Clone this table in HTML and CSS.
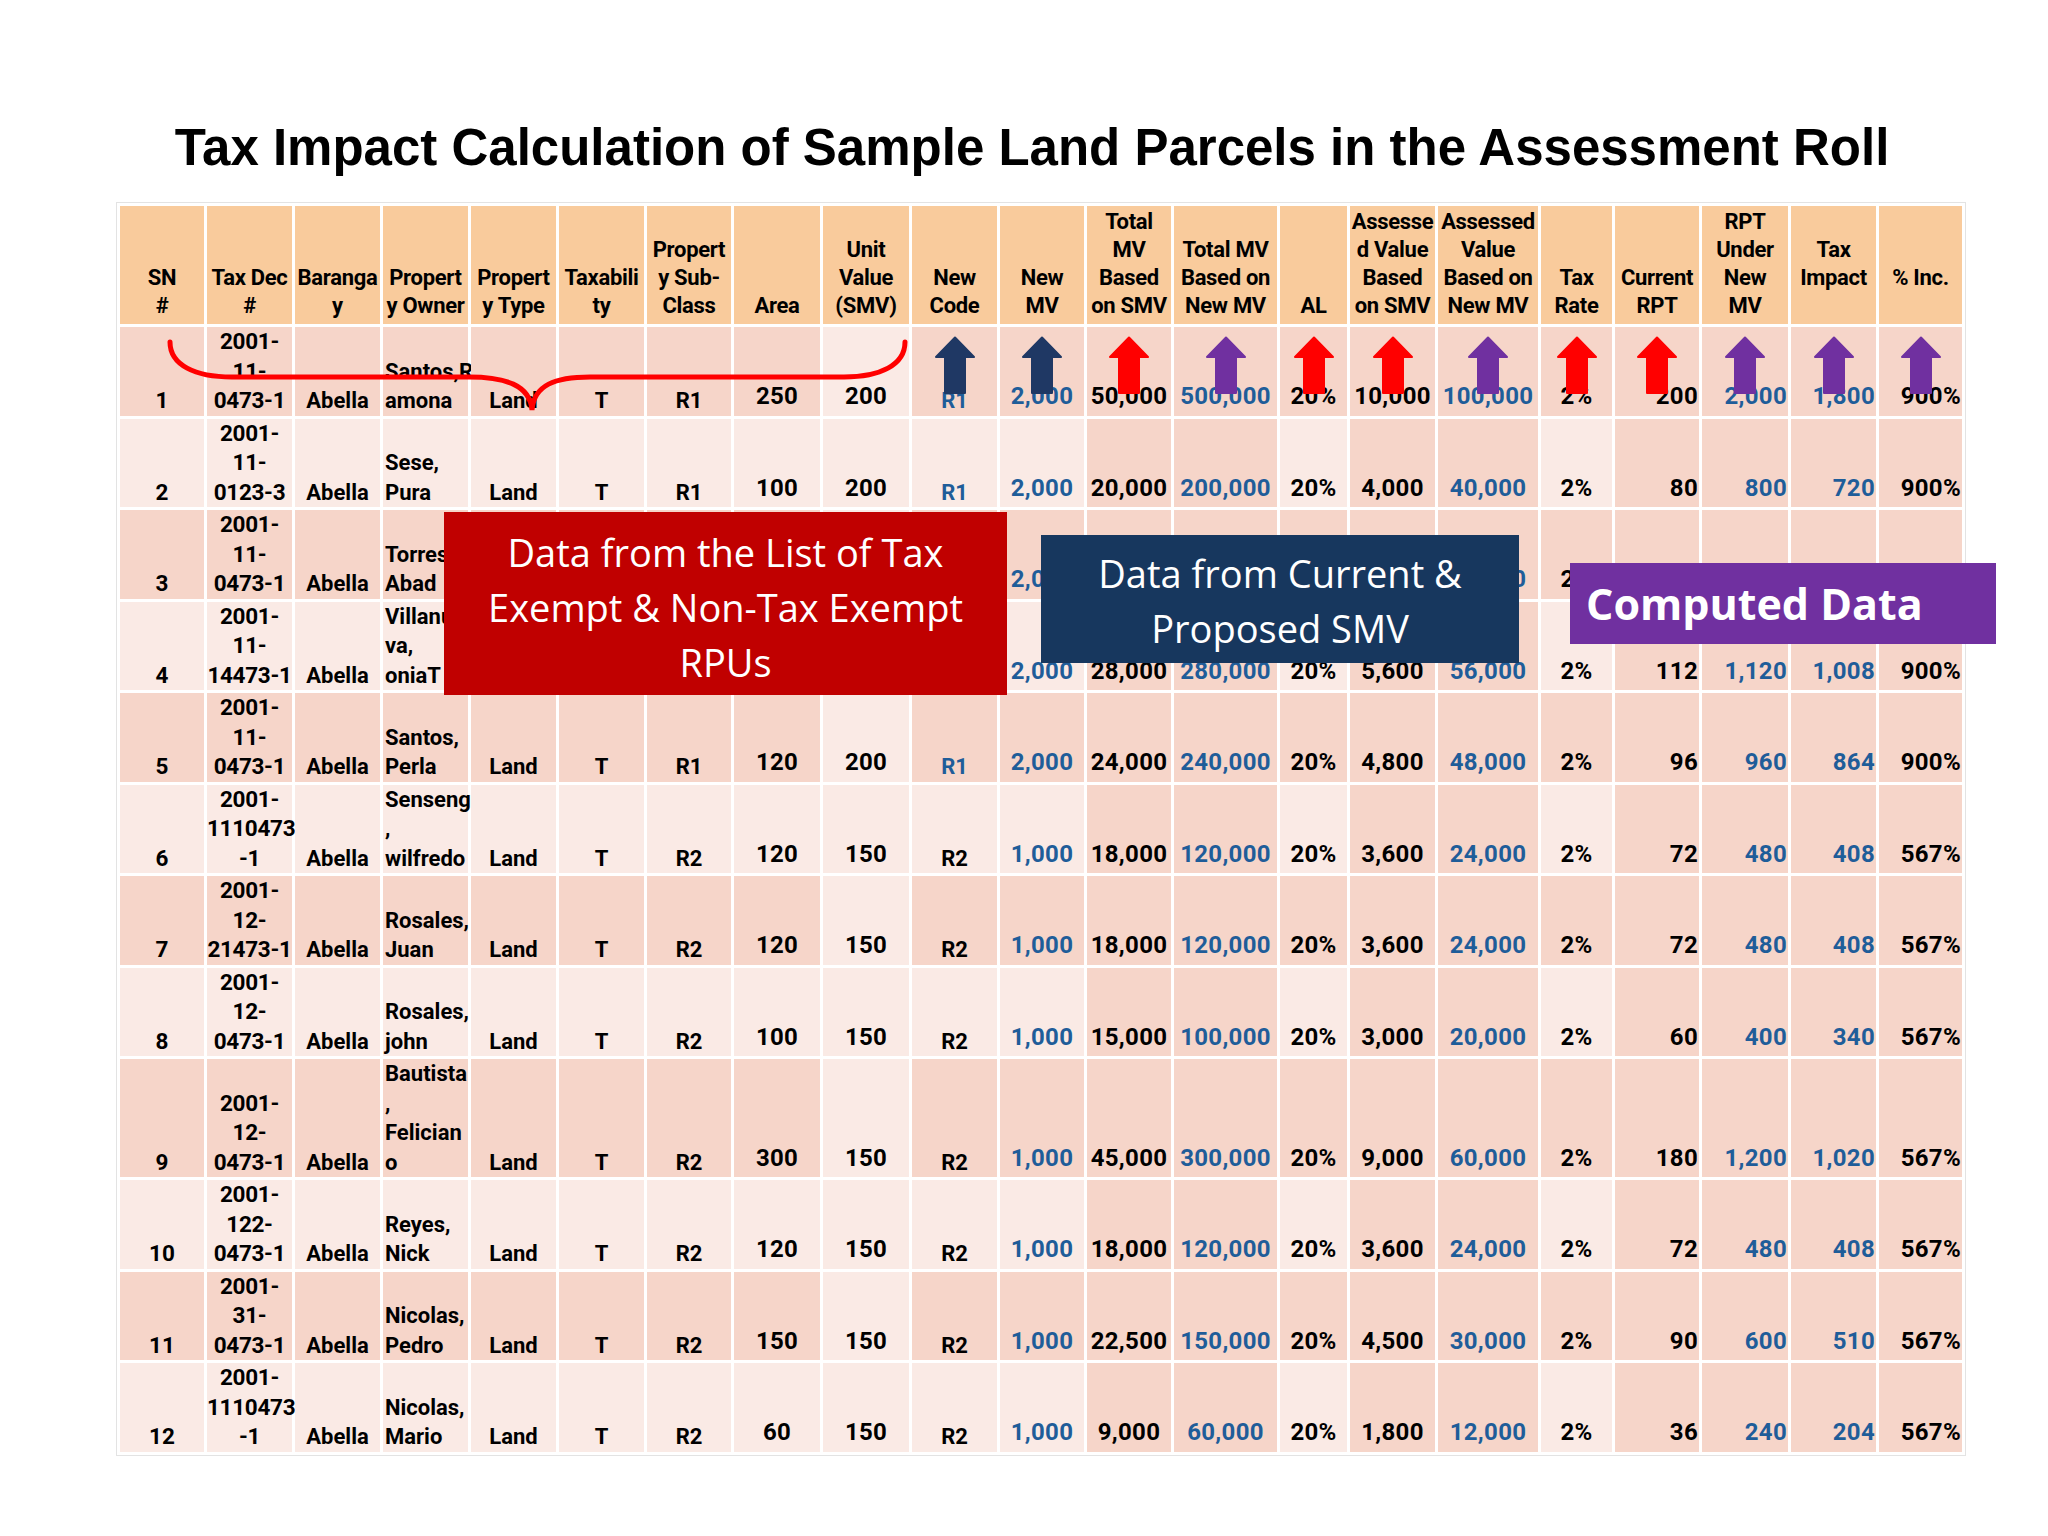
FILE: index.html
```html
<!DOCTYPE html>
<html lang="en">
<head>
<meta charset="utf-8">
<title>Tax Impact Calculation</title>
<link rel="stylesheet" href="styles.css">
</head>
<body>
<div class="page">
  <h1 class="title">Tax Impact Calculation of Sample Land Parcels in the Assessment Roll</h1>
  <table class="roll">
    <colgroup>
      <col><col><col><col><col><col><col><col><col><col><col><col><col><col><col><col><col><col><col><col><col>
    </colgroup>
    <thead>
      <tr>
        <th>SN<br>#</th>
        <th>Tax Dec<br>#</th>
        <th>Baranga<br>y</th>
        <th>Propert<br>y Owner</th>
        <th>Propert<br>y Type</th>
        <th>Taxabili<br>ty</th>
        <th>Propert<br>y Sub-<br>Class</th>
        <th>Area</th>
        <th>Unit<br>Value<br>(SMV)</th>
        <th>New<br>Code</th>
        <th>New<br>MV</th>
        <th>Total<br>MV<br>Based<br>on SMV</th>
        <th>Total MV<br>Based on<br>New MV</th>
        <th>AL</th>
        <th>Assesse<br>d Value<br>Based<br>on SMV</th>
        <th>Assessed<br>Value<br>Based on<br>New MV</th>
        <th>Tax<br>Rate</th>
        <th>Current<br>RPT</th>
        <th>RPT<br>Under<br>New<br>MV</th>
        <th>Tax<br>Impact<br>&nbsp;</th>
        <th>% Inc.<br>&nbsp;</th>
      </tr>
    </thead>
    <tbody>
      <tr>
        <td>1</td><td>2001-<br>11-<br>0473-1</td><td>Abella</td><td>Santos,R<br>amona</td><td>Land</td><td>T</td><td>R1</td><td>250</td><td>200</td>
        <td class="b"><svg class="arrow navy" viewBox="0 0 42 58"><path d="M21 1.5 L40 21 L31 21 L31 57 L11 57 L11 21 L2 21 Z"/></svg>R1</td>
        <td><svg class="arrow navy" viewBox="0 0 42 58"><path d="M21 1.5 L40 21 L31 21 L31 57 L11 57 L11 21 L2 21 Z"/></svg>2,000</td>
        <td><svg class="arrow red" viewBox="0 0 42 58"><path d="M21 1.5 L40 21 L31 21 L31 57 L11 57 L11 21 L2 21 Z"/></svg>50,000</td>
        <td><svg class="arrow purple" viewBox="0 0 42 58"><path d="M21 1.5 L40 21 L31 21 L31 57 L11 57 L11 21 L2 21 Z"/></svg>500,000</td>
        <td><svg class="arrow red" viewBox="0 0 42 58"><path d="M21 1.5 L40 21 L31 21 L31 57 L11 57 L11 21 L2 21 Z"/></svg>20%</td>
        <td><svg class="arrow red" viewBox="0 0 42 58"><path d="M21 1.5 L40 21 L31 21 L31 57 L11 57 L11 21 L2 21 Z"/></svg>10,000</td>
        <td><svg class="arrow purple" viewBox="0 0 42 58"><path d="M21 1.5 L40 21 L31 21 L31 57 L11 57 L11 21 L2 21 Z"/></svg>100,000</td>
        <td><svg class="arrow red" viewBox="0 0 42 58"><path d="M21 1.5 L40 21 L31 21 L31 57 L11 57 L11 21 L2 21 Z"/></svg>2%</td>
        <td><svg class="arrow red" viewBox="0 0 42 58"><path d="M21 1.5 L40 21 L31 21 L31 57 L11 57 L11 21 L2 21 Z"/></svg>200</td>
        <td><svg class="arrow purple" viewBox="0 0 42 58"><path d="M21 1.5 L40 21 L31 21 L31 57 L11 57 L11 21 L2 21 Z"/></svg>2,000</td>
        <td><svg class="arrow purple" viewBox="0 0 42 58"><path d="M21 1.5 L40 21 L31 21 L31 57 L11 57 L11 21 L2 21 Z"/></svg>1,800</td>
        <td><svg class="arrow purple" viewBox="0 0 42 58"><path d="M21 1.5 L40 21 L31 21 L31 57 L11 57 L11 21 L2 21 Z"/></svg>900%</td>
      </tr>
      <tr>
        <td>2</td><td>2001-<br>11-<br>0123-3</td><td>Abella</td><td>Sese,<br>Pura</td><td>Land</td><td>T</td><td>R1</td><td>100</td><td>200</td><td class="b">R1</td><td>2,000</td><td>20,000</td><td>200,000</td><td>20%</td><td>4,000</td><td>40,000</td><td>2%</td><td>80</td><td>800</td><td>720</td><td>900%</td>
      </tr>
      <tr>
        <td>3</td><td>2001-<br>11-<br>0473-1</td><td>Abella</td><td>Torres,<br>Abad</td><td>Land</td><td>T</td><td>R1</td><td>150</td><td>200</td><td class="b">R1</td><td>2,000</td><td>30,000</td><td>300,000</td><td>20%</td><td>6,000</td><td>60,000</td><td>2%</td><td>120</td><td>1,200</td><td>1,080</td><td>900%</td>
      </tr>
      <tr>
        <td>4</td><td>2001-<br>11-<br>14473-1</td><td>Abella</td><td>Villanu<br>va,<br>oniaT</td><td>Land</td><td>T</td><td>R1</td><td>140</td><td>200</td><td class="b">R1</td><td>2,000</td><td>28,000</td><td>280,000</td><td>20%</td><td>5,600</td><td>56,000</td><td>2%</td><td>112</td><td>1,120</td><td>1,008</td><td>900%</td>
      </tr>
      <tr>
        <td>5</td><td>2001-<br>11-<br>0473-1</td><td>Abella</td><td>Santos,<br>Perla</td><td>Land</td><td>T</td><td>R1</td><td>120</td><td>200</td><td class="b">R1</td><td>2,000</td><td>24,000</td><td>240,000</td><td>20%</td><td>4,800</td><td>48,000</td><td>2%</td><td>96</td><td>960</td><td>864</td><td>900%</td>
      </tr>
      <tr>
        <td>6</td><td>2001-<br>1110473<br>-1</td><td>Abella</td><td>Senseng<br>,<br>wilfredo</td><td>Land</td><td>T</td><td>R2</td><td>120</td><td>150</td><td>R2</td><td>1,000</td><td>18,000</td><td>120,000</td><td>20%</td><td>3,600</td><td>24,000</td><td>2%</td><td>72</td><td>480</td><td>408</td><td>567%</td>
      </tr>
      <tr>
        <td>7</td><td>2001-<br>12-<br>21473-1</td><td>Abella</td><td>Rosales,<br>Juan</td><td>Land</td><td>T</td><td>R2</td><td>120</td><td>150</td><td>R2</td><td>1,000</td><td>18,000</td><td>120,000</td><td>20%</td><td>3,600</td><td>24,000</td><td>2%</td><td>72</td><td>480</td><td>408</td><td>567%</td>
      </tr>
      <tr>
        <td>8</td><td>2001-<br>12-<br>0473-1</td><td>Abella</td><td>Rosales,<br>john</td><td>Land</td><td>T</td><td>R2</td><td>100</td><td>150</td><td>R2</td><td>1,000</td><td>15,000</td><td>100,000</td><td>20%</td><td>3,000</td><td>20,000</td><td>2%</td><td>60</td><td>400</td><td>340</td><td>567%</td>
      </tr>
      <tr>
        <td>9</td><td>2001-<br>12-<br>0473-1</td><td>Abella</td><td>Bautista<br>,<br>Felician<br>o</td><td>Land</td><td>T</td><td>R2</td><td>300</td><td>150</td><td>R2</td><td>1,000</td><td>45,000</td><td>300,000</td><td>20%</td><td>9,000</td><td>60,000</td><td>2%</td><td>180</td><td>1,200</td><td>1,020</td><td>567%</td>
      </tr>
      <tr>
        <td>10</td><td>2001-<br>122-<br>0473-1</td><td>Abella</td><td>Reyes,<br>Nick</td><td>Land</td><td>T</td><td>R2</td><td>120</td><td>150</td><td>R2</td><td>1,000</td><td>18,000</td><td>120,000</td><td>20%</td><td>3,600</td><td>24,000</td><td>2%</td><td>72</td><td>480</td><td>408</td><td>567%</td>
      </tr>
      <tr>
        <td>11</td><td>2001-<br>31-<br>0473-1</td><td>Abella</td><td>Nicolas,<br>Pedro</td><td>Land</td><td>T</td><td>R2</td><td>150</td><td>150</td><td>R2</td><td>1,000</td><td>22,500</td><td>150,000</td><td>20%</td><td>4,500</td><td>30,000</td><td>2%</td><td>90</td><td>600</td><td>510</td><td>567%</td>
      </tr>
      <tr>
        <td>12</td><td>2001-<br>1110473<br>-1</td><td>Abella</td><td>Nicolas,<br>Mario</td><td>Land</td><td>T</td><td>R2</td><td>60</td><td>150</td><td>R2</td><td>1,000</td><td>9,000</td><td>60,000</td><td>20%</td><td>1,800</td><td>12,000</td><td>2%</td><td>36</td><td>240</td><td>204</td><td>567%</td>
      </tr>
    </tbody>
  </table>

  <svg class="brace" viewBox="0 0 760 85" width="760" height="85">
    <path d="M10 7 C10 30 35 42 72 42 L309 42 C345 42 370 50 372 75 C374 50 395 42 430 42 L684 42 C720 42 745 30 745 7"/>
  </svg>

  <div class="callout callout-red">Data from the List of Tax<br>Exempt &amp; Non-Tax Exempt<br>RPUs</div>
  <div class="callout callout-navy">Data from Current &amp;<br>Proposed SMV</div>
  <div class="callout callout-purple">Computed Data</div>
</div>
</body>
</html>
```

FILE: styles.css
```css
body {
  margin: 0;
  background: #ffffff;
}

.page {
  position: relative;
  width: 1850px;
  padding: 118px 0 0 116px;
}

.title {
  margin: 0 0 24px;
  padding-right: 18px;
  font-family: "Liberation Sans", Arial, sans-serif;
  font-weight: bold;
  font-size: 51px;
  line-height: 60px;
  text-align: center;
  color: #000;
}

.roll {
  table-layout: fixed;
  width: 1850px;
  border-collapse: separate;
  border-spacing: 3px;
  border: 1px solid #e3e3e3;
  font-family: "Roboto", "Liberation Sans", sans-serif;
  font-weight: bold;
  color: #000;
}

.roll col:nth-child(1) { width: 84px; }
.roll col:nth-child(2) { width: 85px; }
.roll col:nth-child(3) { width: 85px; }
.roll col:nth-child(4) { width: 85px; }
.roll col:nth-child(5) { width: 85px; }
.roll col:nth-child(6) { width: 85px; }
.roll col:nth-child(7) { width: 84px; }
.roll col:nth-child(8) { width: 86px; }
.roll col:nth-child(9) { width: 86px; }
.roll col:nth-child(10) { width: 85px; }
.roll col:nth-child(11) { width: 84px; }
.roll col:nth-child(12) { width: 84px; }
.roll col:nth-child(13) { width: 103px; }
.roll col:nth-child(14) { width: 67px; }
.roll col:nth-child(15) { width: 85px; }
.roll col:nth-child(16) { width: 100px; }
.roll col:nth-child(17) { width: 71px; }
.roll col:nth-child(18) { width: 84px; }
.roll col:nth-child(19) { width: 86px; }
.roll col:nth-child(20) { width: 85px; }
.roll col:nth-child(21) { width: 83px; }

.roll th {
  background: #f9cb9c;
  padding: 2px 0 4px;
  font-size: 22px;
  line-height: 28px;
  font-weight: bold;
  letter-spacing: -0.3px;
  text-align: center;
  vertical-align: bottom;
  white-space: nowrap;
}

.roll td {
  position: relative;
  padding: 0 2px;
  font-size: 22px;
  line-height: 29.5px;
  text-align: center;
  vertical-align: bottom;
  white-space: nowrap;
}

/* banded rows */
.roll tbody tr:nth-child(odd) td { background: #f6d5c9; }
.roll tbody tr:nth-child(even) td { background: #faeae5; }
.roll tbody tr td:nth-child(9) { background: #faeae5; }
.roll tbody tr td:nth-child(12),
.roll tbody tr td:nth-child(13),
.roll tbody tr td:nth-child(15),
.roll tbody tr td:nth-child(16),
.roll tbody tr td:nth-child(18),
.roll tbody tr td:nth-child(19),
.roll tbody tr td:nth-child(20),
.roll tbody tr td:nth-child(21) { background: #f6d5c9; }

/* alignment */
.roll tbody td:nth-child(4) { text-align: left; }
.roll tbody td:nth-child(18),
.roll tbody td:nth-child(19),
.roll tbody td:nth-child(20),
.roll tbody td:nth-child(21) { text-align: right; }

/* digit columns */
.roll tbody td:nth-child(1) { font-size: 22.5px; }
.roll tbody td:nth-child(2) {
  font-size: 22.5px;
  letter-spacing: -0.3px;
  padding: 0;
}

.roll tbody td:nth-child(8),
.roll tbody td:nth-child(9),
.roll tbody td:nth-child(n+11) {
  font-size: 24px;
  letter-spacing: 0.3px;
  padding-bottom: 4px;
}
.roll tbody td:nth-child(n+18) { padding-right: 1px; }

/* blue values */
.roll tbody td.b,
.roll tbody td:nth-child(11),
.roll tbody td:nth-child(13),
.roll tbody td:nth-child(16),
.roll tbody td:nth-child(19),
.roll tbody td:nth-child(20) { color: #1f5d99; }

/* arrows */
.arrow {
  position: absolute;
  top: 9px;
  left: 50%;
  width: 42px;
  height: 58px;
  margin-left: -21px;
}
.arrow path {
  fill: currentColor;
  stroke: currentColor;
  stroke-width: 2;
  stroke-linejoin: round;
}
.arrow.navy { color: #1f3864; }
.arrow.red { color: #ff0000; }
.arrow.purple { color: #7030a0; }

/* brace */
.brace {
  position: absolute;
  left: 160px;
  top: 335px;
}
.brace path {
  fill: none;
  stroke: #ff0000;
  stroke-width: 5;
  stroke-linecap: round;
}

/* callouts */
.callout {
  position: absolute;
  box-sizing: border-box;
  color: #ffffff;
  font-family: "Open Sans", "Noto Sans", sans-serif;
  text-align: center;
}
.callout-red {
  left: 444px;
  top: 512px;
  width: 563px;
  height: 183px;
  padding-top: 13px;
  background: #c00000;
  font-size: 38px;
  line-height: 55px;
}
.callout-navy {
  left: 1041px;
  top: 535px;
  width: 478px;
  height: 128px;
  padding-top: 11px;
  background: #17375e;
  font-size: 38px;
  line-height: 55px;
}
.callout-purple {
  left: 1570px;
  top: 563px;
  width: 426px;
  height: 81px;
  padding-left: 16px;
  background: #7030a0;
  font-size: 43px;
  font-weight: bold;
  line-height: 81px;
  text-align: left;
}
```
